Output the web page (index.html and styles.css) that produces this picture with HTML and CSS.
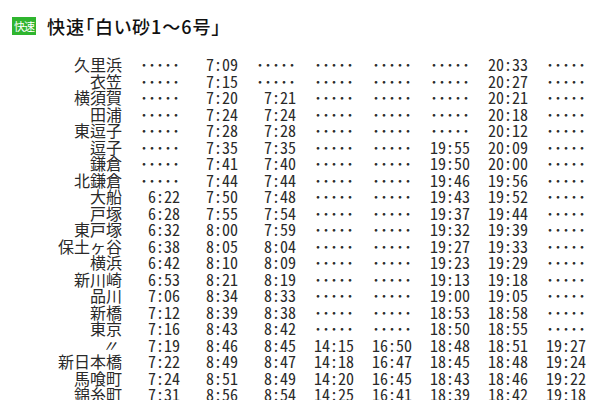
FILE: index.html
```html
<!DOCTYPE html>
<html lang="ja">
<head>
<meta charset="utf-8">
<link rel="stylesheet" href="styles.css">
</head>
<body>
<div class="header">
  <span class="badge">快速</span>
  <span class="title">快速「白い砂1～6号」</span>
</div>
<div class="table">
  <div class="row"><span class="st">久里浜</span><span class="c">･････</span><span class="c">7:09</span><span class="c">･････</span><span class="c">･････</span><span class="c">･････</span><span class="c">･････</span><span class="c">20:33</span><span class="c">･････</span></div>
  <div class="row"><span class="st">衣笠</span><span class="c">･････</span><span class="c">7:15</span><span class="c">･････</span><span class="c">･････</span><span class="c">･････</span><span class="c">･････</span><span class="c">20:27</span><span class="c">･････</span></div>
  <div class="row"><span class="st">横須賀</span><span class="c">･････</span><span class="c">7:20</span><span class="c">7:21</span><span class="c">･････</span><span class="c">･････</span><span class="c">･････</span><span class="c">20:21</span><span class="c">･････</span></div>
  <div class="row"><span class="st">田浦</span><span class="c">･････</span><span class="c">7:24</span><span class="c">7:24</span><span class="c">･････</span><span class="c">･････</span><span class="c">･････</span><span class="c">20:18</span><span class="c">･････</span></div>
  <div class="row"><span class="st">東逗子</span><span class="c">･････</span><span class="c">7:28</span><span class="c">7:28</span><span class="c">･････</span><span class="c">･････</span><span class="c">･････</span><span class="c">20:12</span><span class="c">･････</span></div>
  <div class="row"><span class="st">逗子</span><span class="c">･････</span><span class="c">7:35</span><span class="c">7:35</span><span class="c">･････</span><span class="c">･････</span><span class="c">19:55</span><span class="c">20:09</span><span class="c">･････</span></div>
  <div class="row"><span class="st">鎌倉</span><span class="c">･････</span><span class="c">7:41</span><span class="c">7:40</span><span class="c">･････</span><span class="c">･････</span><span class="c">19:50</span><span class="c">20:00</span><span class="c">･････</span></div>
  <div class="row"><span class="st">北鎌倉</span><span class="c">･････</span><span class="c">7:44</span><span class="c">7:44</span><span class="c">･････</span><span class="c">･････</span><span class="c">19:46</span><span class="c">19:56</span><span class="c">･････</span></div>
  <div class="row"><span class="st">大船</span><span class="c">6:22</span><span class="c">7:50</span><span class="c">7:48</span><span class="c">･････</span><span class="c">･････</span><span class="c">19:43</span><span class="c">19:52</span><span class="c">･････</span></div>
  <div class="row"><span class="st">戸塚</span><span class="c">6:28</span><span class="c">7:55</span><span class="c">7:54</span><span class="c">･････</span><span class="c">･････</span><span class="c">19:37</span><span class="c">19:44</span><span class="c">･････</span></div>
  <div class="row"><span class="st">東戸塚</span><span class="c">6:32</span><span class="c">8:00</span><span class="c">7:59</span><span class="c">･････</span><span class="c">･････</span><span class="c">19:32</span><span class="c">19:39</span><span class="c">･････</span></div>
  <div class="row"><span class="st">保土ヶ谷</span><span class="c">6:38</span><span class="c">8:05</span><span class="c">8:04</span><span class="c">･････</span><span class="c">･････</span><span class="c">19:27</span><span class="c">19:33</span><span class="c">･････</span></div>
  <div class="row"><span class="st">横浜</span><span class="c">6:42</span><span class="c">8:10</span><span class="c">8:09</span><span class="c">･････</span><span class="c">･････</span><span class="c">19:23</span><span class="c">19:29</span><span class="c">･････</span></div>
  <div class="row"><span class="st">新川崎</span><span class="c">6:53</span><span class="c">8:21</span><span class="c">8:19</span><span class="c">･････</span><span class="c">･････</span><span class="c">19:13</span><span class="c">19:18</span><span class="c">･････</span></div>
  <div class="row"><span class="st">品川</span><span class="c">7:06</span><span class="c">8:34</span><span class="c">8:33</span><span class="c">･････</span><span class="c">･････</span><span class="c">19:00</span><span class="c">19:05</span><span class="c">･････</span></div>
  <div class="row"><span class="st">新橋</span><span class="c">7:12</span><span class="c">8:39</span><span class="c">8:38</span><span class="c">･････</span><span class="c">･････</span><span class="c">18:53</span><span class="c">18:58</span><span class="c">･････</span></div>
  <div class="row"><span class="st">東京</span><span class="c">7:16</span><span class="c">8:43</span><span class="c">8:42</span><span class="c">･････</span><span class="c">･････</span><span class="c">18:50</span><span class="c">18:55</span><span class="c">･････</span></div>
  <div class="row"><span class="st ditto">〃</span><span class="c">7:19</span><span class="c">8:46</span><span class="c">8:45</span><span class="c">14:15</span><span class="c">16:50</span><span class="c">18:48</span><span class="c">18:51</span><span class="c">19:27</span></div>
  <div class="row"><span class="st">新日本橋</span><span class="c">7:22</span><span class="c">8:49</span><span class="c">8:47</span><span class="c">14:18</span><span class="c">16:47</span><span class="c">18:45</span><span class="c">18:48</span><span class="c">19:24</span></div>
  <div class="row"><span class="st">馬喰町</span><span class="c">7:24</span><span class="c">8:51</span><span class="c">8:49</span><span class="c">14:20</span><span class="c">16:45</span><span class="c">18:43</span><span class="c">18:46</span><span class="c">19:22</span></div>
  <div class="row"><span class="st">錦糸町</span><span class="c">7:31</span><span class="c">8:56</span><span class="c">8:54</span><span class="c">14:25</span><span class="c">16:41</span><span class="c">18:39</span><span class="c">18:42</span><span class="c">19:18</span></div>
</div>
</body>
</html>
```

FILE: styles.css
```css
html, body {
  margin: 0;
  padding: 0;
  background: #ffffff;
}
body {
  font-family: "Noto Sans CJK JP", "Noto Sans", sans-serif;
  color: #222;
  overflow: hidden;
}
.header {
  box-sizing: border-box;
  height: 56px;
  padding: 16px 0 0 12px;
  display: flex;
  align-items: flex-start;
}
.badge {
  flex: none;
  display: inline-flex;
  align-items: center;
  justify-content: center;
  width: 24px;
  height: 18px;
  margin-top: 1px;
  background: #2fb52f;
  color: #fff;
  font-size: 11px;
  line-height: 1;
  letter-spacing: -1px;
}
.title {
  flex: none;
  margin-left: 11px;
  font-size: 18px;
  line-height: 20px;
  font-weight: 500;
  color: #111;
  font-feature-settings: "palt";
  letter-spacing: 1px;
}
.table {
  font-size: 16px;
  line-height: 16.5px;
  font-feature-settings: "hwid";
  color: #2a2a2a;
}
.row {
  display: grid;
  grid-template-columns: 140px repeat(8, 58px);
  height: 16.5px;
  white-space: nowrap;
}
.st {
  text-align: right;
  padding-right: 18px;
}
.st.ditto {
  padding-right: 22px;
  font-style: italic;
}
.c {
  width: 40px;
  text-align: right;
}
```
